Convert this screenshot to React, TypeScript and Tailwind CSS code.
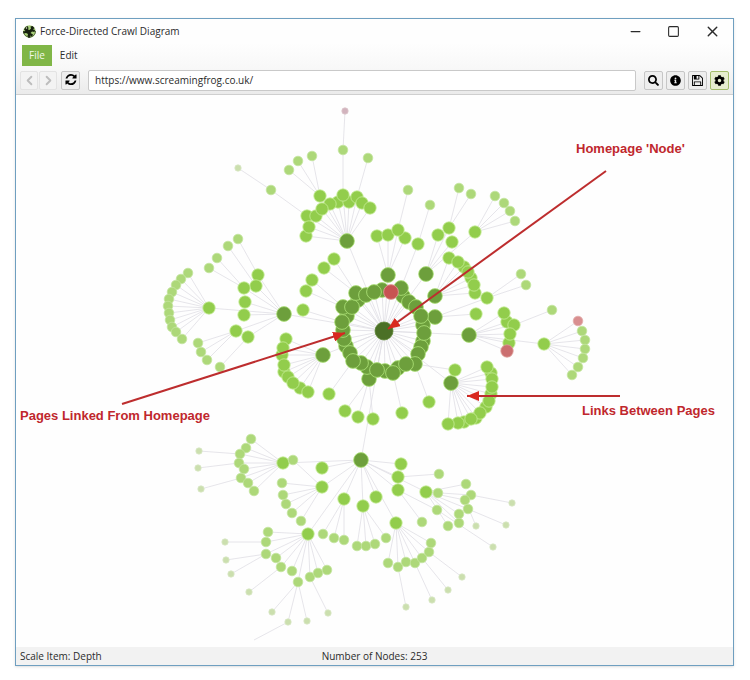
import type { ReactNode } from "react";
import { FaCog, FaInfoCircle, FaSearch } from "react-icons/fa";
import { ChevronLeft, ChevronRight, Minus, Square, X } from "lucide-react";

type Point = [number, number];
type Depth = "home" | "page" | "sub" | "leaf" | "tip" | "end";

type Branch = {
  from: Point;
  depth: Depth;
  to: Point[];
};

const home: Point = [384, 331];

const looks = {
  home: { r: 9, fill: "#4b7026", stroke: "#5c8432" },
  page: { r: 7.4, fill: "#6d9f3c", stroke: "#b0e47a" },
  sub: { r: 6.2, fill: "#92cd4c", stroke: "#c6ee98" },
  leaf: { r: 4.8, fill: "#add879", stroke: "#c4e5a0" },
  tip: { r: 3.2, fill: "#cbdfae", stroke: "#d9e7c6" },
  end: { r: 0, fill: "none", stroke: "none" },
};

// every branch links one node to the nodes a level deeper
const branches: Branch[] = [
  {
    from: home,
    depth: "page",
    to: [
      [388, 275], [426, 274], [435, 296], [435, 317], [323, 355], [451, 383],
      [347, 241], [284, 314], [469, 335], [361, 460], [369, 379], [403, 296],
      [401, 288], [409, 302], [416, 307], [423, 325], [421, 316], [423, 341],
      [421, 347], [424, 333], [418, 354], [415, 364], [398, 368], [406, 364],
      [385, 371], [393, 373], [367, 367], [377, 370], [361, 363], [346, 346],
      [350, 353], [353, 361], [344, 339], [343, 330], [347, 316], [342, 322],
      [343, 307], [358, 300], [352, 307], [356, 293], [366, 295], [382, 290],
      [374, 292],
    ],
  },
  {
    from: [347, 241],
    depth: "sub",
    to: [
      [320, 196], [338, 202], [349, 202], [343, 195], [357, 197], [362, 203],
      [370, 208], [330, 204], [307, 216], [316, 216], [322, 209], [306, 236],
      [309, 227],
    ],
  },
  { from: [320, 196], depth: "leaf", to: [[289, 170], [298, 161], [312, 156]] },
  { from: [307, 216], depth: "leaf", to: [[271, 190]] },
  { from: [271, 190], depth: "tip", to: [[238, 168]] },
  { from: [343, 195], depth: "leaf", to: [[343, 150]] },
  { from: [357, 197], depth: "leaf", to: [[368, 158]] },
  { from: [388, 275], depth: "sub", to: [[377, 236], [388, 235], [405, 238], [398, 230]] },
  { from: [401, 288], depth: "sub", to: [[418, 244]] },
  { from: [398, 230], depth: "leaf", to: [[408, 190]] },
  { from: [418, 244], depth: "leaf", to: [[430, 205]] },
  { from: [426, 274], depth: "sub", to: [[438, 235], [449, 228], [452, 242], [475, 232]] },
  { from: [449, 228], depth: "leaf", to: [[459, 188], [471, 194]] },
  { from: [475, 232], depth: "leaf", to: [[495, 196], [504, 203], [510, 211], [515, 221]] },
  {
    from: [435, 296],
    depth: "sub",
    to: [
      [449, 258], [464, 267], [458, 262], [471, 278], [468, 272], [475, 293],
      [474, 285],
    ],
  },
  { from: [435, 317], depth: "sub", to: [[487, 298], [476, 314]] },
  { from: [487, 298], depth: "leaf", to: [[521, 274], [526, 285]] },
  { from: [469, 335], depth: "sub", to: [[507, 322], [504, 313], [514, 325], [509, 343], [510, 334]] },
  { from: [514, 325], depth: "leaf", to: [[552, 310]] },
  { from: [469, 335], depth: "sub", to: [[544, 344]] },
  {
    from: [544, 344],
    depth: "leaf",
    to: [[582, 331], [585, 340], [585, 349], [583, 358], [578, 367], [572, 375]],
  },
  { from: [415, 364], depth: "sub", to: [[455, 370], [429, 402]] },
  {
    from: [451, 383],
    depth: "sub",
    to: [
      [491, 373], [487, 367], [492, 379], [491, 394], [492, 387], [486, 407],
      [489, 401], [476, 418], [480, 413], [464, 422], [471, 419], [458, 423],
      [448, 424],
    ],
  },
  {
    from: [323, 355],
    depth: "sub",
    to: [
      [286, 339], [282, 355], [283, 348], [284, 372], [284, 365], [288, 377],
      [300, 388], [293, 383], [308, 392],
    ],
  },
  { from: [353, 361], depth: "sub", to: [[329, 394]] },
  { from: [369, 379], depth: "sub", to: [[345, 411], [358, 417], [373, 419]] },
  { from: [393, 373], depth: "sub", to: [[402, 413]] },
  { from: [342, 322], depth: "sub", to: [[303, 310]] },
  { from: [343, 307], depth: "sub", to: [[306, 291], [312, 280]] },
  { from: [356, 293], depth: "sub", to: [[324, 268], [334, 259]] },
  {
    from: [284, 314],
    depth: "sub",
    to: [
      [258, 275], [256, 286], [244, 288], [245, 302], [244, 315], [236, 331],
      [248, 337], [209, 308],
    ],
  },
  { from: [258, 275], depth: "leaf", to: [[238, 239]] },
  { from: [256, 286], depth: "leaf", to: [[228, 246]] },
  { from: [244, 288], depth: "leaf", to: [[217, 258], [209, 268]] },
  {
    from: [209, 308],
    depth: "leaf",
    to: [
      [188, 273], [181, 279], [176, 285], [172, 292], [169, 299], [168, 306],
      [169, 313], [170, 320], [172, 327], [176, 332], [182, 339],
    ],
  },
  { from: [236, 331], depth: "leaf", to: [[198, 343], [201, 352], [207, 360]] },
  { from: [248, 337], depth: "leaf", to: [[220, 367]] },
  {
    from: [361, 460],
    depth: "sub",
    to: [
      [401, 464], [398, 477], [398, 490], [426, 492], [376, 497], [363, 506],
      [344, 499], [396, 523], [322, 468], [322, 487], [283, 463], [308, 534],
    ],
  },
  {
    from: [283, 463],
    depth: "leaf",
    to: [
      [251, 439], [246, 448], [240, 454], [239, 463], [244, 469], [241, 478],
      [248, 483], [254, 491],
    ],
  },
  { from: [240, 454], depth: "tip", to: [[199, 451]] },
  { from: [239, 463], depth: "tip", to: [[198, 468]] },
  { from: [241, 478], depth: "tip", to: [[201, 489]] },
  {
    from: [322, 487],
    depth: "leaf",
    to: [[293, 460], [282, 483], [283, 495], [286, 504], [292, 513], [301, 521]],
  },
  { from: [344, 499], depth: "leaf", to: [[323, 534], [334, 538], [344, 540]] },
  { from: [363, 506], depth: "leaf", to: [[357, 546], [366, 546], [375, 544], [386, 538]] },
  {
    from: [396, 523],
    depth: "leaf",
    to: [[388, 563], [398, 567], [406, 562], [415, 563], [422, 558], [429, 552], [431, 543]],
  },
  { from: [398, 567], depth: "tip", to: [[406, 607]] },
  { from: [415, 563], depth: "tip", to: [[432, 600]] },
  { from: [422, 558], depth: "tip", to: [[448, 590]] },
  { from: [429, 552], depth: "tip", to: [[462, 577]] },
  { from: [398, 477], depth: "leaf", to: [[439, 474]] },
  { from: [398, 490], depth: "leaf", to: [[422, 522], [437, 510]] },
  {
    from: [426, 492],
    depth: "leaf",
    to: [
      [438, 493], [466, 484], [471, 495], [465, 500], [468, 509], [459, 514],
      [459, 523], [448, 526],
    ],
  },
  { from: [471, 495], depth: "tip", to: [[512, 503]] },
  { from: [468, 509], depth: "tip", to: [[506, 525]] },
  { from: [465, 500], depth: "tip", to: [[476, 526]] },
  { from: [437, 510], depth: "tip", to: [[493, 547]] },
  {
    from: [308, 534],
    depth: "leaf",
    to: [
      [268, 532], [266, 542], [266, 554], [276, 558], [281, 567], [292, 571],
      [298, 582], [310, 577], [318, 573], [327, 570],
    ],
  },
  { from: [266, 542], depth: "tip", to: [[225, 542]] },
  { from: [266, 554], depth: "tip", to: [[226, 560], [231, 574]] },
  { from: [281, 567], depth: "tip", to: [[249, 592]] },
  { from: [298, 582], depth: "tip", to: [[272, 612], [288, 622], [307, 621]] },
  { from: [310, 577], depth: "tip", to: [[328, 613]] },
  { from: [288, 622], depth: "end", to: [[254, 640]] },
];

// pages that answered with an error
const errors = [
  { from: home, at: [391, 292], r: 7.4, fill: "#c75352", stroke: "#e2a09a" },
  { from: [469, 335], at: [507, 351], r: 6.2, fill: "#cb6f70", stroke: "#dda19b" },
  { from: [544, 344], at: [578, 321], r: 4.8, fill: "#d98f90", stroke: "#e2adab" },
  { from: [343, 150], at: [345, 111], r: 3.2, fill: "#d2b3bd", stroke: "#dcc6cc" },
];

const arrows = [
  { from: [606, 171], to: [388, 329] },
  { from: [122, 404], to: [345, 333] },
  { from: [620, 396], to: [467, 396] },
];

const captions = [
  { text: "Homepage 'Node'", x: 576, y: 153 },
  { text: "Pages Linked From Homepage", x: 20, y: 420 },
  { text: "Links Between Pages", x: 582, y: 415 },
];

function CrawlDiagram() {
  return (
    <svg viewBox="16 95 717 552" className="block h-auto w-full" role="img" aria-label="Crawl diagram">
      <defs>
        <marker id="head" viewBox="0 0 12 10" refX="12" refY="5" markerWidth="12" markerHeight="10" markerUnits="userSpaceOnUse" orient="auto">
          <path d="M0 0L12 5L0 10z" fill="#d9281f" />
        </marker>
      </defs>
      <g stroke="#dfdee4" strokeWidth="0.8">
        {branches.map((b) =>
          b.to.map(([x, y]) => (
            <line key={`${b.from}-${x}-${y}`} x1={b.from[0]} y1={b.from[1]} x2={x} y2={y} />
          ))
        )}
        {errors.map((e) => (
          <line key={`${e.at}`} x1={e.from[0]} y1={e.from[1]} x2={e.at[0]} y2={e.at[1]} />
        ))}
      </g>
      {branches.map((b) =>
        b.to.map(([x, y]) => (
          <circle key={`${x}-${y}`} cx={x} cy={y} r={looks[b.depth].r} fill={looks[b.depth].fill} stroke={looks[b.depth].stroke} strokeWidth="0.8" />
        ))
      )}
      {errors.map((e) => (
        <circle key={`${e.at}`} cx={e.at[0]} cy={e.at[1]} r={e.r} fill={e.fill} stroke={e.stroke} strokeWidth="0.8" />
      ))}
      <circle cx={home[0]} cy={home[1]} r={looks.home.r} fill={looks.home.fill} stroke={looks.home.stroke} strokeWidth="0.8" />
      {arrows.map((a) => (
        <line key={`${a.from}`} x1={a.from[0]} y1={a.from[1]} x2={a.to[0]} y2={a.to[1]} stroke="#bd2d2e" strokeWidth="2" markerEnd="url(#head)" />
      ))}
      {captions.map((c) => (
        <text key={c.text} x={c.x} y={c.y} fill="#c0272d" className="font-['Liberation_Sans',sans-serif] text-[13px] font-bold">
          {c.text}
        </text>
      ))}
    </svg>
  );
}

function FrogLogo() {
  return (
    <svg width="13" height="13" viewBox="0 0 26 26" aria-hidden="true">
      <circle cx="13" cy="13" r="12.500" fill="#a9cf7a" />
      <path d="M2 9l3-5 4-2 2 4-1 3 3 1 3-3-1-4 4-1 4 4-3 3 4 1-1 4-5-1-3 3 5 3-2 4-4-2 1 4-4 1-2-4 1-4-4-2-5 1-1-4 5-1z" fill="#17210f" />
      <circle cx="7" cy="6" r="1.500" fill="#dcebc9" />
      <path d="M1 12c0 7 5 12 12 12s12-5 12-12" fill="none" stroke="#2c3d1b" strokeWidth="1.500" />
    </svg>
  );
}

function RefreshIcon() {
  return (
    <svg width="12" height="12" viewBox="0 0 1536 1664" fill="currentColor" aria-hidden="true">
      <path d="M1511 928q0 5-1 7-64 268-268 434.500t-478 166.500q-146 0-282.500-55t-243.500-157l-129 129q-19 19-45 19t-45-19-19-45v-448q0-26 19-45t45-19h448q26 0 45 19t19 45-19 45l-137 137q71 66 161 102t187 36q134 0 250-65t186-179q11-17 53-117 8-23 30-23h192q13 0 22.500 9.500t9.500 22.500zm25-800v448q0 26-19 45t-45 19h-448q-26 0-45-19t-19-45 19-45l138-138q-148-137-349-137-134 0-250 65t-186 179q-11 17-53 117-8 23-30 23h-199q-13 0-22.500-9.500t-9.500-22.500v-7q65-268 270-434.500t480-166.500q146 0 284 55.500t245 156.500l130-129q19-19 45-19t45 19 19 45z" />
    </svg>
  );
}

function SaveIcon() {
  return (
    <svg width="11" height="11" viewBox="0 0 1536 1536" fill="currentColor" aria-hidden="true">
      <path d="M384 1408h768v-384h-768v384zm896 0h128v-896q0-14-10-38.500t-20-34.500l-281-281q-10-10-34-20t-39-10v416q0 40-28 68t-68 28h-576q-40 0-68-28t-28-68v-416h-128v1280h128v-416q0-40 28-68t68-28h832q40 0 68 28t28 68v416zm-384-928v-320q0-13-9.500-22.500t-22.500-9.500h-192q-13 0-22.500 9.500t-9.500 22.500v320q0 13 9.500 22.500t22.500 9.500h192q13 0 22.500-9.500t9.500-22.500zm640 32v928q0 40-28 68t-68 28h-1344q-40 0-68-28t-28-68v-1344q0-40 28-68t68-28h928q40 0 88 20t76 48l280 280q28 28 48 76t20 88z" />
    </svg>
  );
}

function ToolButton({ label, active, children }: { label: string; active?: boolean; children: ReactNode }) {
  return (
    <button
      type="button"
      aria-label={label}
      className={
        active
          ? "flex h-[19px] w-[19px] items-center justify-center rounded-xs border border-[#a3bd6b] bg-[#e6edcf] text-black"
          : "flex h-[19px] w-[19px] items-center justify-center rounded-xs border border-[#c6c6c6] bg-[#eeeeee] text-black"
      }
    >
      {children}
    </button>
  );
}

export default function App() {
  return (
    <div className="bg-white pt-[18px] pr-4 pb-3 pl-[15px] font-['Open_Sans',sans-serif] text-[10px] text-[#2b2b2b]">
      <div className="border border-[#6f9fc0] bg-[#fefefe] shadow-sm">
        <header className="flex h-6 items-center pr-3 pl-[7px]">
          <FrogLogo />
          <h1 className="ml-1 flex-1">Force-Directed Crawl Diagram</h1>
          <div className="flex items-center gap-6">
            <button type="button" aria-label="Minimize">
              <Minus size={15} strokeWidth={2} />
            </button>
            <button type="button" aria-label="Maximize">
              <Square size={13} strokeWidth={2} />
            </button>
            <button type="button" aria-label="Close">
              <X size={17} strokeWidth={2} />
            </button>
          </div>
        </header>

        <nav className="flex h-6 items-center bg-linear-to-b from-[#fefefe] to-[#f8f8f8] pl-[6px]">
          <button type="button" className="h-[21px] bg-[#80b647] px-[7px] text-[#f3f9ea]">
            File
          </button>
          <button type="button" className="h-[21px] px-2">
            Edit
          </button>
        </nav>

        <div className="flex h-7 items-center border-b border-[#cfcfcf] bg-linear-to-b from-[#f8f8f8] to-[#ebebeb] px-1 pb-px">
          <div className="flex gap-px">
            <button type="button" disabled aria-label="Back" className="flex h-[19px] w-[18px] items-center justify-center rounded-xs border border-[#e3e3e3] bg-[#f3f3f3] text-[#bdbdbd]">
              <ChevronLeft size={15} strokeWidth={3} />
            </button>
            <button type="button" disabled aria-label="Forward" className="flex h-[19px] w-[18px] items-center justify-center rounded-xs border border-[#e3e3e3] bg-[#f3f3f3] text-[#bdbdbd]">
              <ChevronRight size={15} strokeWidth={3} />
            </button>
          </div>
          <div className="ml-1">
            <ToolButton label="Refresh">
              <RefreshIcon />
            </ToolButton>
          </div>
          <input
            type="text"
            aria-label="Address"
            defaultValue="https://www.screamingfrog.co.uk/"
            className="mr-2 ml-2 h-[21px] min-w-0 flex-1 rounded-xs border border-[#c9c9c9] bg-white px-[6px]"
          />
          <div className="flex gap-[3px]">
            <ToolButton label="Search">
              <FaSearch size={11} />
            </ToolButton>
            <ToolButton label="Information">
              <FaInfoCircle size={11} />
            </ToolButton>
            <ToolButton label="Save">
              <SaveIcon />
            </ToolButton>
            <ToolButton label="Settings" active>
              <FaCog size={11} />
            </ToolButton>
          </div>
        </div>

        <main>
          <CrawlDiagram />
        </main>

        <footer className="grid h-[18px] grid-cols-[1fr_auto_1fr] items-center bg-[#f2f2f2] px-1">
          <span>Scale Item: Depth</span>
          <span>Number of Nodes: 253</span>
        </footer>
      </div>
    </div>
  );
}
